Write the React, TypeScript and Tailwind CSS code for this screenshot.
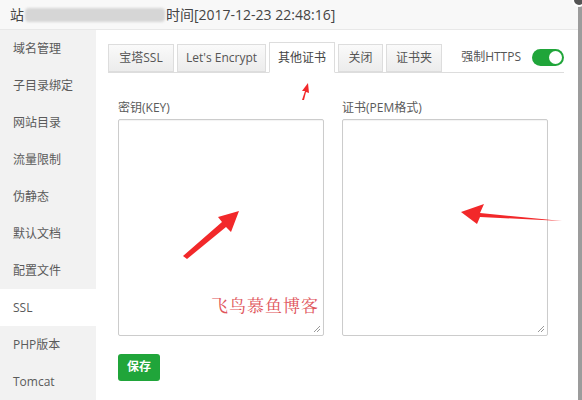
import React from 'react';

const menu = ['域名管理', '子目录绑定', '网站目录', '流量限制', '伪静态', '默认文档', '配置文件', 'SSL', 'PHP版本', 'Tomcat'];
const tabs: { label: string; w: string }[] = [
  { label: '宝塔SSL', w: 'w-[66px]' },
  { label: "Let's Encrypt", w: 'w-[89px]' },
  { label: '其他证书', w: 'w-[66px]' },
  { label: '关闭', w: 'w-[45px]' },
  { label: '证书夹', w: 'w-[56px]' },
];

const font = { fontFamily: '"Open Sans", "Noto Sans CJK SC", sans-serif' };

const Grip = () => (
  <svg className="absolute right-[2px] bottom-[2px]" width="8" height="8" viewBox="0 0 8 8">
    <path d="M7 1L1 7M7 4L4 7" stroke="#999" strokeWidth="1" />
  </svg>
);

export default function App() {
  return (
    <div className="relative w-[582px] h-[400px] overflow-hidden bg-white text-[#5a5a5a]" style={font}>
      <div className="flex h-full">
        <div className="flex-1 flex flex-col">
          {/* header */}
          <div className="h-[33px] flex items-center pl-[10px] bg-[#f8f8f8] border-b border-[#e8e8e8] text-[14px] text-[#444]">
            <span>站</span>
            <span className="w-[140px] h-[14px] bg-[#d6d6d6] rounded-sm mx-[1px] blur-[1px]"></span>
            <span>时间[2017-12-23 22:48:16]</span>
          </div>

          <div className="flex flex-1">
            {/* sidebar */}
            <div className="w-[96px] bg-[#f2f2f2] flex flex-col">
              {menu.map(m => (
                <div
                  key={m}
                  className={`h-[37px] shrink-0 flex items-center pl-[13px] text-[12px] ${m === 'SSL' ? 'bg-white' : ''}`}
                >
                  {m}
                </div>
              ))}
            </div>

            {/* main */}
            <div className="flex-1 pl-[12px] pr-[14px] pt-[14px]">
              <div className="flex items-end border-b border-[#ddd] h-[29px]">
                {tabs.map(t => (
                  <div
                    key={t.label}
                    className={
                      t.label === '其他证书'
                        ? `${t.w} shrink-0 whitespace-nowrap h-[31px] mr-[3px] flex items-center justify-center bg-white border border-[#ddd] border-b-white -mb-px text-[12px] text-[#444]`
                        : `${t.w} shrink-0 whitespace-nowrap h-[28px] mr-[3px] flex items-center justify-center bg-gradient-to-b from-[#fafafa] to-[#ececec] border border-[#ddd] text-[12px] text-[#555]`
                    }
                  >
                    {t.label}
                  </div>
                ))}
                <div className="ml-auto self-center flex items-center gap-[11px] pb-[2px] whitespace-nowrap">
                  <span className="text-[12px] text-[#555]">强制HTTPS</span>
                  <div className="w-[32px] h-[17px] rounded-full bg-[#20a53a] flex items-center justify-end pr-[2px]">
                    <div className="w-[13px] h-[13px] rounded-full bg-white"></div>
                  </div>
                </div>
              </div>

              <div className="pl-[10px] pt-[27px] flex gap-[18px]">
                <div className="flex flex-col">
                  <span className="text-[12px] h-[19px] leading-[16px]">密钥(KEY)</span>
                  <div className="relative w-[206px] h-[217px] border border-[#ccc] rounded-[2px] shadow-[inset_0_1px_1px_rgba(0,0,0,0.05)]">
                    <span
                      className="absolute right-[4px] bottom-[18px] text-[17px] text-[#e0545a] tracking-[1px]"
                      style={{ fontFamily: '"Noto Serif CJK SC", "Noto Sans CJK SC", serif' }}
                    >
                      飞鸟慕鱼博客
                    </span>
                    <Grip />
                  </div>
                </div>
                <div className="flex flex-col">
                  <span className="text-[12px] h-[19px] leading-[16px]">证书(PEM格式)</span>
                  <div className="relative w-[206px] h-[217px] border border-[#ccc] rounded-[2px] shadow-[inset_0_1px_1px_rgba(0,0,0,0.05)]">
                    <Grip />
                  </div>
                </div>
              </div>

              <div className="pl-[10px] pt-[17px]">
                <button className="w-[42px] h-[27px] rounded-[3px] bg-[#20a53a] text-white text-[12px] font-bold">保存</button>
              </div>
            </div>
          </div>
        </div>
        {/* scrollbar edge */}
        <div className="w-[4px] bg-[#9c9c9c] shrink-0"></div>
      </div>

      {/* close button peeking */}
      <div className="absolute right-[-4px] top-[-7px] w-[14px] h-[14px] rounded-full bg-[#555] border-2 border-white"></div>

      {/* red annotation arrows */}
      <svg className="absolute left-0 top-0 pointer-events-none" width="582" height="400">
        <g fill="#f2282a">
          <polygon points="183,256 222,222 218,217 239,211 231,232 226,227 187,259" />
          <polygon points="562,221 480,213 484,204 461,212 477,224 480,217" />
          <polygon points="302,100 305,91 302,91 308,83 309,93 306,92 304,100" />
        </g>
      </svg>
    </div>
  );
}
